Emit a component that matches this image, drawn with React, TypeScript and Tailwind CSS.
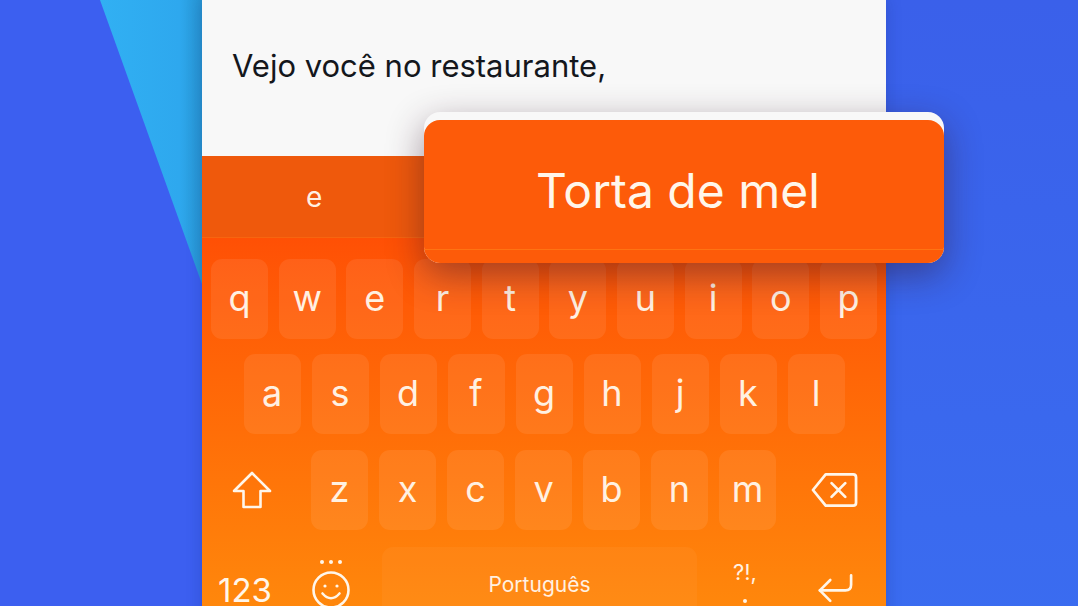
import React from 'react';

const rowOne = ['q', 'w', 'e', 'r', 't', 'y', 'u', 'i', 'o', 'p'];
const rowTwo = ['a', 's', 'd', 'f', 'g', 'h', 'j', 'k', 'l'];
const rowThree = ['z', 'x', 'c', 'v', 'b', 'n', 'm'];

const Key = ({ label }: { label: string }) => (
  <div className="flex h-[80px] w-[57px] shrink-0 items-center justify-center rounded-[11px] bg-white/[0.08] pb-[3px] text-[36px] leading-none text-[#fff1e2]">
    {label}
  </div>
);

const ShiftIcon = () => (
  <svg width="40" height="38" viewBox="0 0 40 38" fill="none" stroke="#fff6ea" strokeWidth="2.6" strokeLinejoin="round">
    <path d="M20 2 L38 20 H28.5 V36 H11.5 V20 H2 Z" />
  </svg>
);

const BackspaceIcon = () => (
  <svg width="47" height="36" viewBox="0 0 48 36" fill="none" stroke="#fff6ea" strokeWidth="2.8" strokeLinecap="round" strokeLinejoin="round">
    <path d="M15 2 H43 Q46 2 46 5 V31 Q46 34 43 34 H15 L2 18 Z" />
    <path d="M21 11 L35 25 M35 11 L21 25" />
  </svg>
);

const SmileIcon = () => (
  <svg width="38" height="38" viewBox="0 0 38 38" fill="none" stroke="#fff6ea" strokeWidth="2.6" strokeLinecap="round">
    <circle cx="19" cy="19" r="17.5" />
    <circle cx="13" cy="15" r="1.6" fill="#fff6ea" stroke="none" />
    <circle cx="25" cy="15" r="1.6" fill="#fff6ea" stroke="none" />
    <path d="M10.5 22.5 Q19 32 27.5 22.5" />
  </svg>
);

const ReturnIcon = () => (
  <svg width="36" height="31" viewBox="0 0 38 32" fill="none" stroke="#fff6ea" strokeWidth="2.8" strokeLinecap="round" strokeLinejoin="round">
    <path d="M36 2 V12 Q36 18 30 18 H3" />
    <path d="M14 7 L3 18 L14 29" />
  </svg>
);

export default function App() {
  return (
    <div className="grid h-[606px] w-[1078px] grid-cols-[202px_684px_192px] overflow-hidden bg-[#3b62ec] font-['Inter',sans-serif]">
      {/* Left background with the light wedge */}
      <div className="bg-[#3c5ff0]">
        <svg width="202" height="606" viewBox="0 0 202 606">
          <defs>
            <linearGradient id="wedge" x1="0" x2="1" y1="0" y2="0">
              <stop offset="0" stopColor="#31b0f3" />
              <stop offset="0.78" stopColor="#2ea8ee" />
              <stop offset="1" stopColor="#2795d2" />
            </linearGradient>
          </defs>
          <polygon points="100,0 202,0 202,284" fill="url(#wedge)" />
        </svg>
      </div>

      {/* Phone */}
      <div className="relative z-10 flex flex-col shadow-[0_0_14px_rgba(20,40,120,0.25)]">
        <div className="h-[156px] shrink-0 bg-[#f8f8f8] pl-[30px] pt-[47px] text-[31px] leading-[38px] text-[#14171c]">
          Vejo você no restaurante,
        </div>

        <div className="flex h-[82px] shrink-0 items-center border-b border-[#f7650f] bg-[#ef590c] pl-[104px] text-[28px] text-[#fff1e2]">
          e
        </div>

        <div className="flex flex-1 flex-col bg-gradient-to-b from-[#ff5005] via-[#ff6e08] to-[#ff8a0c] px-[9px] pt-[21px]">
          <div className="flex justify-between">
            {rowOne.map((k) => (
              <Key key={k} label={k} />
            ))}
          </div>

          <div className="mt-[15px] flex justify-center gap-[11px]">
            {rowTwo.map((k) => (
              <Key key={k} label={k} />
            ))}
          </div>

          <div className="mt-[16px] flex">
            <div className="flex w-[82px] items-center justify-center">
              <ShiftIcon />
            </div>
            <div className="ml-[18px] flex gap-[11px]">
              {rowThree.map((k) => (
                <Key key={k} label={k} />
              ))}
            </div>
            <div className="flex flex-1 items-center justify-center pl-[16px]">
              <BackspaceIcon />
            </div>
          </div>

          <div className="mt-[17px] flex">
            <div className="w-[68px] pt-[28px] text-center text-[33px] leading-[30px] text-[#fff6ea]">123</div>
            <div className="flex w-[103px] flex-col items-center pt-[13px]">
              <div className="mb-[7px] flex gap-[5px]">
                <span className="h-[4px] w-[4px] rounded-full bg-[#fff6ea]" />
                <span className="h-[4px] w-[4px] rounded-full bg-[#fff6ea]" />
                <span className="h-[4px] w-[4px] rounded-full bg-[#fff6ea]" />
              </div>
              <SmileIcon />
            </div>
            <div className="h-[80px] w-[315px] rounded-t-[11px] bg-white/[0.04] pt-[25px] text-center text-[21px] leading-[26px] text-[#fff1e2]">
              Português
            </div>
            <div className="flex w-[96px] flex-col items-center pt-[11px] text-[22px] leading-[28px] text-[#fff1e2]">
              <span>?!,</span>
              <span className="mt-[13px] h-[4px] w-[4px] rounded-full bg-[#fff6ea]" />
            </div>
            <div className="flex flex-1 justify-center pt-[26px]">
              <ReturnIcon />
            </div>
          </div>
        </div>

        {/* Word preview over the keyboard */}
        <div className="absolute left-[222px] top-[112px] h-[151px] w-[520px] rounded-[16px] bg-[#f8f8f8] shadow-[0_12px_36px_rgba(50,20,40,0.45)]">
          <div className="mt-[8px] flex h-[143px] flex-col rounded-[16px] bg-[#fd5b09]">
            <div className="flex h-[130px] items-center justify-center border-b border-[#ff7412] pr-[12px] pt-[12px] text-[48px] leading-none text-[#fff6ea]">
              Torta de mel
            </div>
          </div>
        </div>
      </div>

      {/* Right background */}
      <div className="bg-gradient-to-b from-[#3a60ea] to-[#3a6cf0]" />
    </div>
  );
}
